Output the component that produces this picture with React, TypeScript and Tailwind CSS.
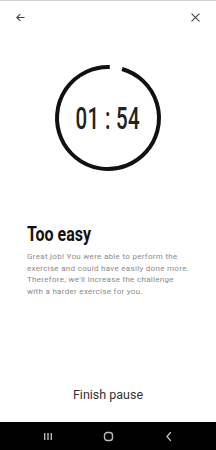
import React from 'react';

const Ring: React.FC = () => {
  const r = 51;
  const c = 55;
  const pt = (deg: number) => {
    const a = (deg * Math.PI) / 180;
    return `${c + r * Math.sin(a)} ${c - r * Math.cos(a)}`;
  };
  return (
    <svg width="110" height="110" viewBox="0 0 110 110" className="col-start-1 row-start-1">
      <path d={`M ${pt(16)} A ${r} ${r} 0 1 1 ${pt(2)}`} fill="none" stroke="#111" strokeWidth="4" />
    </svg>
  );
};

export default function App() {
  return (
    <div
      className="w-[216px] h-[450px] bg-white flex flex-col border-t border-[#cfcfcf] overflow-hidden"
      style={{ fontFamily: 'Roboto, "Liberation Sans", sans-serif' }}
    >
      {/* header */}
      <div className="h-[33px] flex items-center justify-between pl-[15px] pr-[15px]">
        <svg width="11" height="11" viewBox="0 0 24 24" fill="none" stroke="#444" strokeWidth="2.4" strokeLinecap="round" strokeLinejoin="round">
          <path d="M20 12H5" />
          <path d="M11 5l-7 7 7 7" />
        </svg>
        <svg width="11" height="11" viewBox="0 0 24 24" fill="none" stroke="#444" strokeWidth="2.4" strokeLinecap="round">
          <path d="M4 4l16 16" />
          <path d="M20 4L4 20" />
        </svg>
      </div>

      {/* timer */}
      <div className="mt-[29px] flex justify-center">
        <div className="grid place-items-center">
          <Ring />
          <div className="col-start-1 row-start-1 text-[31px] leading-none font-medium text-[#222] scale-x-[0.66] tracking-[0.5px]">
            01 : 54
          </div>
        </div>
      </div>

      {/* message */}
      <div className="px-[27px] mt-[49px]">
        <h1 className="text-[20px] leading-[24px] font-bold text-[#111] origin-left scale-x-[0.8]">
          Too easy
        </h1>
        <p className="mt-[5px] text-[8px] leading-[11.5px] text-[#8a8a8a] tracking-[0.3px] whitespace-nowrap">
          Great job! You were able to perform the
          <br />
          exercise and could have easily done more.
          <br />
          Therefore, we'll increase the challenge
          <br />
          with a harder exercise for you.
        </p>
      </div>

      <div className="flex-1" />

      <div className="pb-[19px] flex justify-center">
        <span className="text-[12.5px] leading-[16px] text-[#333]">Finish pause</span>
      </div>

      {/* nav bar */}
      <div className="h-[28px] bg-black flex items-center justify-between px-[43px]">
        <svg width="10" height="9" viewBox="0 0 10 9">
          <rect x="1" y="1" width="1.4" height="7" fill="#bbb" />
          <rect x="4.3" y="1" width="1.4" height="7" fill="#bbb" />
          <rect x="7.6" y="1" width="1.4" height="7" fill="#bbb" />
        </svg>
        <svg width="11" height="11" viewBox="0 0 11 11">
          <rect x="1.5" y="1.5" width="8" height="8" rx="2.8" fill="none" stroke="#bbb" strokeWidth="1.4" />
        </svg>
        <svg width="9" height="11" viewBox="0 0 9 11">
          <path d="M6.5 1.5L3 5.5l3.5 4" fill="none" stroke="#bbb" strokeWidth="1.4" strokeLinecap="round" strokeLinejoin="round" />
        </svg>
      </div>
    </div>
  );
}
